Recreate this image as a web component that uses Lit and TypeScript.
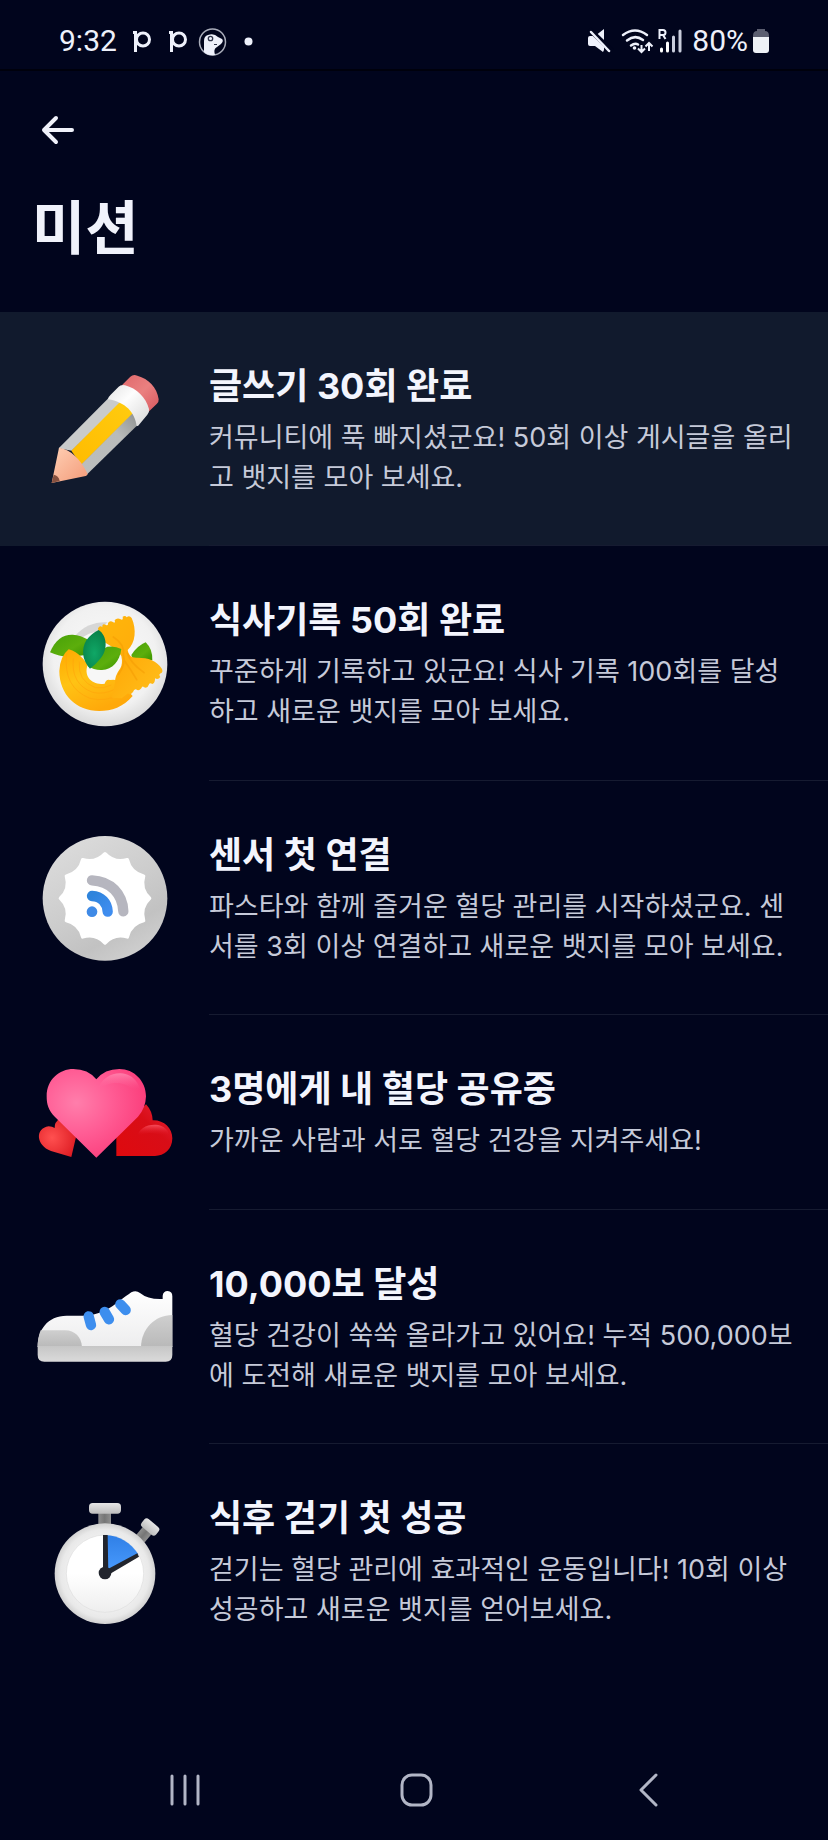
import { LitElement, html, css, svg, TemplateResult } from "lit";
import { customElement, property } from "lit/decorators.js";

const ns = (label: string, viewBox: string, body: TemplateResult) => html`
  <svg class="art" viewBox=${viewBox} role="img" aria-label=${label}>${body}</svg>
`;

/** Twelve-pointed scalloped disc outline. */
function scallop(cx: number, cy: number, peak: number, valley: number): string {
  const at = (r: number, deg: number) => {
    const a = (deg * Math.PI) / 180;
    return `${(cx + r * Math.sin(a)).toFixed(1)} ${(cy - r * Math.cos(a)).toFixed(1)}`;
  };
  let d = `M${at(peak, 0)}`;
  for (let i = 0; i < 12; i++) d += `Q${at(valley, i * 30 + 15)} ${at(peak, i * 30 + 30)}`;
  return d + "Z";
}

const pencil = ns("연필", "0 -3 510 480", svg`
  <defs>
    <linearGradient id="pw" x1="0" y1="0" x2="1" y2="1"><stop offset="0" stop-color="#ffd0b5"/><stop offset="1" stop-color="#f39a78"/></linearGradient>
    <linearGradient id="pe" x1="0" y1="0" x2="1" y2="1"><stop offset="0" stop-color="#e0696c"/><stop offset=".5" stop-color="#ea8080"/><stop offset="1" stop-color="#d8575e"/></linearGradient>
    <linearGradient id="pf" x1="0" y1="0" x2="1" y2="1"><stop offset="0" stop-color="#e4e4e4"/><stop offset=".4" stop-color="#fdfdfd"/><stop offset="1" stop-color="#d6d6d6"/></linearGradient>
    <linearGradient id="py" x1="0" y1="1" x2="1" y2="0"><stop offset="0" stop-color="#ffbb00"/><stop offset="1" stop-color="#ffcc10"/></linearGradient>
    <linearGradient id="pg" x1="0" y1="1" x2="1" y2="0"><stop offset="0" stop-color="#bcbebd"/><stop offset=".65" stop-color="#b9bbba"/><stop offset="1" stop-color="#8d908f"/></linearGradient>
  </defs>
  <path fill="url(#pe)" d="M307 104L331 80Q340 72 352 77C386 86 411 112 416 148Q417 156 410 162L385 186Z"/>
  <path fill="#c9cbcb" d="M268 142L116 295L155 302L308 152Z"/>
  <path fill="url(#py)" d="M306 150L154 302L184 345L342 188Z"/>
  <path fill="url(#pg)" d="M342 186L183 344L200 374L352 226Z"/>
  <path fill="url(#pw)" d="M95 399L117 293C152 298 184 330 203 372Q202 377 197 378Z"/>
  <path fill="#87513f" d="M95 399L101 374Q116 376 119 393Z"/>
  <path fill="url(#pf)" d="M264 148Q265 140 272 134L296 110Q303 103 315 106C350 115 378 143 387 177Q389 187 382 194L359 222Q355 229 350 229C346 188 316 156 264 148Z"/>
`);

const pasta = ns("파스타 접시", "0 9 510 480", svg`
  <defs>
    <radialGradient id="dp" cx=".5" cy=".45" r=".55"><stop offset="0" stop-color="#fafafa"/><stop offset=".75" stop-color="#f1f1f1"/><stop offset="1" stop-color="#dadada"/></radialGradient>
    <linearGradient id="dy" x1="0" y1="0" x2=".5" y2="1"><stop offset="0" stop-color="#ffa800"/><stop offset=".5" stop-color="#ffc314"/><stop offset="1" stop-color="#ffa90a"/></linearGradient>
    <linearGradient id="db" x1="0" y1="0" x2="1" y2="1"><stop offset="0" stop-color="#ffb70b"/><stop offset=".5" stop-color="#ffad0b"/><stop offset="1" stop-color="#ffc01c"/></linearGradient>
    <linearGradient id="dg" x1="0" y1="0" x2="1" y2="1"><stop offset="0" stop-color="#46a008"/><stop offset=".6" stop-color="#5cae0c"/><stop offset="1" stop-color="#3a9300"/></linearGradient>
    <radialGradient id="dt" cx=".5" cy=".6" r=".6"><stop offset="0" stop-color="#10a766"/><stop offset="1" stop-color="#07824a"/></radialGradient>
  </defs>
  <circle cx="255" cy="249" r="187" fill="url(#dp)"/>
  <path fill="#d7d7d7" d="M165 165C190 135 225 122 262 124L236 150L200 185Z"/>
  <circle cx="250" cy="262" r="112" fill="#f7f7f7"/>
  <path fill="url(#dg)" d="M90 214C105 176 130 160 158 161Q184 163 202 175L196 222L150 228Q115 226 90 214Z"/>
  <path fill="url(#dg)" d="M334 222Q352 194 377 184Q398 204 397 238L340 238Z"/>
  <path fill="url(#dy)" d="M146 205C178 214 192 238 204 250C188 286 218 315 254 308Q258 294 270 297Q300 292 312 315L338 345C310 378 275 390 238 390C168 390 118 340 118 270Q120 226 146 205Z"/>
  <g fill="none" stroke="#ffa30b" stroke-width="3" opacity=".55">
    <path d="M140 218Q128 320 210 352Q258 364 298 340"/>
    <path d="M160 232Q152 310 218 334Q252 342 286 324"/>
    <path d="M178 242Q172 300 226 320Q250 324 274 312"/>
  </g>
  <path fill="url(#db)" d="M234 142Q240 132 247 139Q246 126 257 131Q265 136 264 126Q270 117 280 124Q287 128 284 117Q292 109 302 115Q310 119 308 107Q316 102 320 109Q328 101 335 111C350 145 347 185 323 207Q326 232 352 230C385 230 410 238 426 264Q430 274 422 277Q415 281 421 288Q414 298 405 292Q406 306 397 309Q388 303 386 312Q382 324 372 319Q367 313 364 322Q356 332 348 325Q342 324 339 333Q330 344 324 337L305 352L275 350L285 305Q284 285 301 262Q309 248 304 225Q292 205 256 185Q236 170 234 142Z"/>
  <g fill="none" stroke="#f29400" stroke-width="5" stroke-linecap="round" opacity=".4">
    <path d="M280 168Q315 190 310 222Q318 248 296 280"/><path d="M322 216Q330 245 372 275"/><path d="M314 240Q334 268 350 296"/>
  </g>
  <path fill="url(#dg)" d="M204 256Q230 210 262 197Q286 194 304 204C299 242 277 266 246 267Q222 268 204 256Z"/>
  <path fill="url(#dt)" d="M236 147C263 165 263 207 242 232Q228 250 210 263C185 236 184 204 199 178Q213 158 236 147Z"/>
`);

const sensor = ns("센서", "0 -9 510 480", svg`
  <defs>
    <linearGradient id="sg" x1=".2" y1="0" x2=".8" y2="1"><stop offset="0" stop-color="#dcdcdc"/><stop offset=".5" stop-color="#cccccc"/><stop offset=".75" stop-color="#c2c2c2"/><stop offset="1" stop-color="#d2d2d2"/></linearGradient>
    <linearGradient id="sb" x1="0" y1="0" x2="1" y2="1"><stop offset="0" stop-color="#2f84dc"/><stop offset="1" stop-color="#3f8def"/></linearGradient>
  </defs>
  <circle cx="255" cy="232" r="187" fill="url(#sg)"/>
  <path d=${scallop(255, 232, 134, 108)} fill="#fff" stroke="#fff" stroke-width="10" stroke-linejoin="round"/>
  <g fill="none" stroke-width="31" stroke-linecap="round">
    <path stroke="#b6b6bf" d="M216 178C272 180 308 220 310 271"/>
    <path stroke="url(#sb)" d="M216 225C244 226 262 246 263 272"/>
  </g>
  <circle cx="216" cy="272" r="16" fill="#3f8ae6"/>
`);

const hearts = ns("하트", "0 -24 510 480", svg`
  <defs>
    <radialGradient id="hp" cx=".3" cy=".38" r=".7"><stop offset="0" stop-color="#ff7eab"/><stop offset=".5" stop-color="#ff5d95"/><stop offset="1" stop-color="#fb3f7c"/></radialGradient>
    <radialGradient id="hl" cx=".35" cy=".5" r=".7"><stop offset="0" stop-color="#ff5050"/><stop offset="1" stop-color="#dd1b22"/></radialGradient>
    <linearGradient id="hr" x1="0" y1="1" x2="1" y2="0"><stop offset="0" stop-color="#df0a0e"/><stop offset=".6" stop-color="#d80d17"/><stop offset="1" stop-color="#e7253b"/></linearGradient>
    <linearGradient id="hs" x1="0" y1="0" x2="0" y2="1"><stop offset="0" stop-color="#ff8fb5" stop-opacity=".75"/><stop offset=".6" stop-color="#ff5f98" stop-opacity="0"/></linearGradient>
    <linearGradient id="ht" x1="0" y1="0" x2="0" y2="1"><stop offset="0" stop-color="#ff5d6c" stop-opacity=".75"/><stop offset=".6" stop-color="#e01020" stop-opacity="0"/></linearGradient>
  </defs>
  <path fill="url(#hl)" d="M154 348L93 330C48 314 44 262 86 256Q97 256 104 261Q103 243 121 232L170 280Z"/>
  <path fill="url(#hr)" d="M289 345V280L378 190Q397 210 398 238C432 237 457 262 457 292C457 325 432 345 405 345Z"/>
  <path fill="url(#ht)" d="M352 288C356 250 420 238 443 270Q452 290 440 304C424 274 385 268 352 288Z"/>
  <path fill="url(#hp)" d="M229 350L105 228C85 208 80 190 80 166C80 116 118 84 160 84Q204 84 229 115Q254 84 298 84C342 84 378 120 378 166Q377 202 354 227Z"/>
  <path fill="url(#hs)" d="M232 148C244 112 274 96 302 97C342 99 368 134 360 176C342 126 280 108 232 148Z"/>
`);

const shoe = ns("운동화", "0 -72 510 480", svg`
  <defs>
    <linearGradient id="ow" x1="0" y1="0" x2="0" y2="1"><stop offset="0" stop-color="#ffffff"/><stop offset="1" stop-color="#ededee"/></linearGradient>
    <linearGradient id="og" x1="0" y1="0" x2="0" y2="1"><stop offset="0" stop-color="#cfcfcf"/><stop offset="1" stop-color="#b9b9b9"/></linearGradient>
    <linearGradient id="os" x1="0" y1="0" x2="0" y2="1"><stop offset="0" stop-color="#c6c6c6"/><stop offset="1" stop-color="#dadada"/></linearGradient>
  </defs>
  <path fill="url(#ow)" d="M53 228C53 178 82 134 140 134H190C255 134 290 94 334 64Q348 56 360 66Q384 86 428 84V74Q430 60 443 60Q457 61 457 76V228Z"/>
  <path fill="url(#og)" d="M53 228Q53 200 62 178H136C164 178 184 198 186 228Z"/>
  <path fill="url(#og)" d="M457 132V228H363C364 174 404 132 457 132Z"/>
  <path fill="url(#os)" d="M53 225H457V252Q457 272 437 272H73Q53 272 53 252Z"/>
  <g stroke="#3d8eee" stroke-width="31" stroke-linecap="round"><path d="M206 136L213 162"/><path d="M254 123L267 145"/><path d="M301 100L317 117"/></g>
`);

const stopwatch = ns("스톱워치", "-30 0 510 480", svg`
  <defs>
    <linearGradient id="wk" x1="0" y1="0" x2="0" y2="1"><stop offset="0" stop-color="#e6e6e6"/><stop offset="1" stop-color="#bdbdbd"/></linearGradient>
    <linearGradient id="wn" x1="0" y1="0" x2="1" y2="0"><stop offset="0" stop-color="#8f8f8f"/><stop offset=".5" stop-color="#767676"/><stop offset="1" stop-color="#909090"/></linearGradient>
    <radialGradient id="wr" cx=".5" cy=".5" r=".5"><stop offset=".75" stop-color="#eeeeee"/><stop offset=".88" stop-color="#e9e9e9"/><stop offset="1" stop-color="#d2d2d2"/></radialGradient>
    <linearGradient id="wf" x1="0" y1="0" x2="0" y2="1"><stop offset=".5" stop-color="#ffffff"/><stop offset="1" stop-color="#eeeeee"/></linearGradient>
    <linearGradient id="wb" x1="0" y1="0" x2="0" y2="1"><stop offset="0" stop-color="#2f7fe6"/><stop offset="1" stop-color="#4a9cff"/></linearGradient>
  </defs>
  <rect x="205" y="88" width="38" height="42" fill="url(#wn)"/>
  <rect x="177" y="63" width="96" height="32" rx="11" fill="url(#wk)"/>
  <g transform="rotate(40 361 136)">
    <rect x="343" y="142" width="34" height="40" fill="url(#wn)"/>
    <rect x="332" y="120" width="56" height="31" rx="10" fill="url(#wk)"/>
  </g>
  <circle cx="225" cy="275" r="151" fill="url(#wr)"/>
  <circle cx="225" cy="275" r="116" fill="url(#wf)" stroke="#dedede" stroke-width="2"/>
  <path fill="url(#wb)" d="M225 274V159C268 160 303 182 325 217Z"/>
  <path fill="#22252d" d="M219 159H233L235 274H219ZM322 214L327 224L233 280L224 266Z"/>
  <circle cx="225" cy="273" r="19" fill="#22252d"/>
`);

interface Mission { title: string; text: string; art: TemplateResult; fresh?: boolean; }

const missions: Mission[] = [
  { title: "글쓰기 30회 완료", text: "커뮤니티에 푹 빠지셨군요! 50회 이상 게시글을 올리고 뱃지를 모아 보세요.", art: pencil, fresh: true },
  { title: "식사기록 50회 완료", text: "꾸준하게 기록하고 있군요! 식사 기록 100회를 달성하고 새로운 뱃지를 모아 보세요.", art: pasta },
  { title: "센서 첫 연결", text: "파스타와 함께 즐거운 혈당 관리를 시작하셨군요. 센서를 3회 이상 연결하고 새로운 뱃지를 모아 보세요.", art: sensor },
  { title: "3명에게 내 혈당 공유중", text: "가까운 사람과 서로 혈당 건강을 지켜주세요!", art: hearts },
  { title: "10,000보 달성", text: "혈당 건강이 쑥쑥 올라가고 있어요! 누적 500,000보에 도전해 새로운 뱃지를 모아 보세요.", art: shoe },
  { title: "식후 걷기 첫 성공", text: "걷기는 혈당 관리에 효과적인 운동입니다! 10회 이상 성공하고 새로운 뱃지를 얻어보세요.", art: stopwatch },
];

@customElement("status-bar")
export class StatusBar extends LitElement {
  static styles = css`
    :host { display: block; border-bottom: 2px solid #00010c; font: 400 30px/36px Roboto, sans-serif; color: #eef1fb; }
    .bar { display: flex; justify-content: space-between; align-items: center; padding: 23px 58px 10px 59px; }
    .side { display: flex; align-items: center; }
    svg { display: block; height: 36px; fill: none; }
    .notes { width: 124px; margin-left: 13px; }
    .radios { width: 98px; margin-right: 8px; }
    .battery { width: 18px; margin-left: 4px; }
  `;
  render() {
    return html`
      <div class="bar">
        <div class="side">
          <span>9:32</span>
          <svg class="notes" viewBox="130 23 124 36" aria-hidden="true">
            <g stroke="#eef1fb" stroke-width="3">
              <path d="M135.500 31V52M133 32.500H136"/><circle cx="143" cy="39.500" r="6.500"/>
              <path d="M171.500 31V52M169 32.500H172"/><circle cx="179" cy="39.500" r="6.500"/>
            </g>
            <circle cx="212.500" cy="42" r="13" stroke="#a9adba" stroke-width="1.500"/>
            <path fill="#eef1fb" d="M204 52V41Q204 36 208 35Q214 33 218 37L222 39Q224 41 221 44L217 47Q213 49 215 55Q208 56 204 52Z"/>
            <circle cx="210.500" cy="38.500" r="2.200" stroke="#30354a" stroke-width="1.300"/>
            <path d="M214 44.500H217" stroke="#30354a"/>
            <circle cx="248.500" cy="41.500" r="4" fill="#eef1fb"/>
          </svg>
        </div>
        <div class="side">
          <svg class="radios" viewBox="586 23 98 36" aria-hidden="true">
            <path fill="#eef1fb" d="M588 38Q588 36 590 36H595L604 29V50L603 52L595 46H590Q588 46 588 44Z"/>
            <path stroke="#01051d" stroke-width="5" d="M589 29L612 51"/>
            <path stroke="#eef1fb" stroke-width="2.500" stroke-linecap="round" d="M591 32L609 51"/>
            <g stroke="#eef1fb" stroke-width="2.500" stroke-linecap="round">
              <path d="M623 35Q635 26 647 35M627 40.500Q635 34 643 40M631 45.500Q635 42.500 638 44.500"/>
            </g>
            <circle cx="634.500" cy="48" r="1.800" fill="#eef1fb"/>
            <path stroke="#eef1fb" stroke-width="2" d="M641.500 45V52M638 48.500L641.500 52L645 48.500M649 51V43M645.500 46.500L649 43L652.500 46.500"/>
            <path stroke="#eef1fb" stroke-width="2" d="M659.500 39V30H663Q665.500 30 665.500 32.500Q665.500 35 663 35H660M663 35L665.500 39"/>
            <g stroke="#c9cddc" stroke-width="3" stroke-linecap="round"><path stroke="#fff" d="M661.500 49V51M667.500 43V51"/><path d="M673.500 37V51M680 31V51"/></g>
          </svg>
          <span>80%</span>
          <svg class="battery" viewBox="752 23 18 36" aria-hidden="true">
            <path fill="#5b5e70" d="M757 29H765V31Q769 31 769 36V40H753V36Q753 31 757 31Z"/>
            <path fill="#eef1f6" d="M753 37H769V50Q769 53 766 53H756Q753 53 753 50Z"/>
          </svg>
        </div>
      </div>`;
  }
}

@customElement("mission-row")
export class MissionRow extends LitElement {
  @property({ attribute: false }) mission!: Mission;
  static styles = css`
    :host { display: block; }
    .row { display: grid; grid-template-columns: 170px 1fr; column-gap: 19px; padding-left: 20px; }
    .fresh { background: #111a2d; }
    .art { display: block; width: 170px; height: 160px; align-self: center; }
    .body { padding: 50px 32px 48px 0; border-bottom: 1px solid #161b31; }
    .title { margin: 0 0 8px; font-size: 36px; line-height: 48px; font-weight: 700; color: #f3f5fd; }
    .text { margin: 0; font-size: 27px; line-height: 40px; font-weight: 400; color: #c6cad9; word-break: break-all; }
    :host(:last-of-type) .body { border-color: transparent; }
    :host(:nth-of-type(odd)) .body { padding-bottom: 47px; }
  `;
  render() {
    const m = this.mission;
    return html`
      <article class="row ${m.fresh ? "fresh" : ""}">
        ${m.art}
        <div class="body"><h2 class="title">${m.title}</h2><p class="text">${m.text}</p></div>
      </article>`;
  }
}

@customElement("app-root")
export class AppRoot extends LitElement {
  static styles = css`
    :host {
      display: flex; flex-direction: column; min-height: 100vh;
      background: #01051d; color: #f0f2fb;
      font-family: Inter, "Noto Sans CJK KR", sans-serif;
    }
    header { padding: 29px 20px 48px; }
    button { display: block; border: 0; padding: 0; background: none; color: inherit; cursor: pointer; }
    .back { width: 72px; height: 60px; }
    .back svg { display: block; width: 72px; height: 60px; }
    h1 { margin: 32px 12px 0; font-size: 58px; line-height: 72px; font-weight: 700; }
    main { flex: 1; }
    nav { display: grid; grid-template-columns: repeat(3, 1fr); padding: 0 68px; color: #b2b6c6; }
    nav button { width: 100%; height: 100px; }
    nav svg { display: block; width: 60px; height: 60px; margin: 0 auto; }
    svg { fill: none; stroke: currentColor; stroke-linecap: round; stroke-linejoin: round; }
  `;
  render() {
    return html`
      <status-bar></status-bar>
      <header>
        <button class="back" aria-label="뒤로">
          <svg viewBox="0 0 72 60" stroke-width="4"><path d="M52 30H24M36 18L24 30L36 42"/></svg>
        </button>
        <h1>미션</h1>
      </header>
      <main>${missions.map((m) => html`<mission-row .mission=${m}></mission-row>`)}</main>
      <nav aria-label="시스템 탐색">
        <button aria-label="최근 앱"><svg viewBox="0 0 60 60" stroke-width="3"><path d="M19 16V44M32 16V44M45 16V44"/></svg></button>
        <button aria-label="홈"><svg viewBox="0 0 60 60" stroke-width="3"><rect x="18" y="15" width="29" height="30" rx="10"/></svg></button>
        <button aria-label="이전"><svg viewBox="0 0 60 60" stroke-width="3"><path d="M41 15L26 30L41 45"/></svg></button>
      </nav>`;
  }
}
